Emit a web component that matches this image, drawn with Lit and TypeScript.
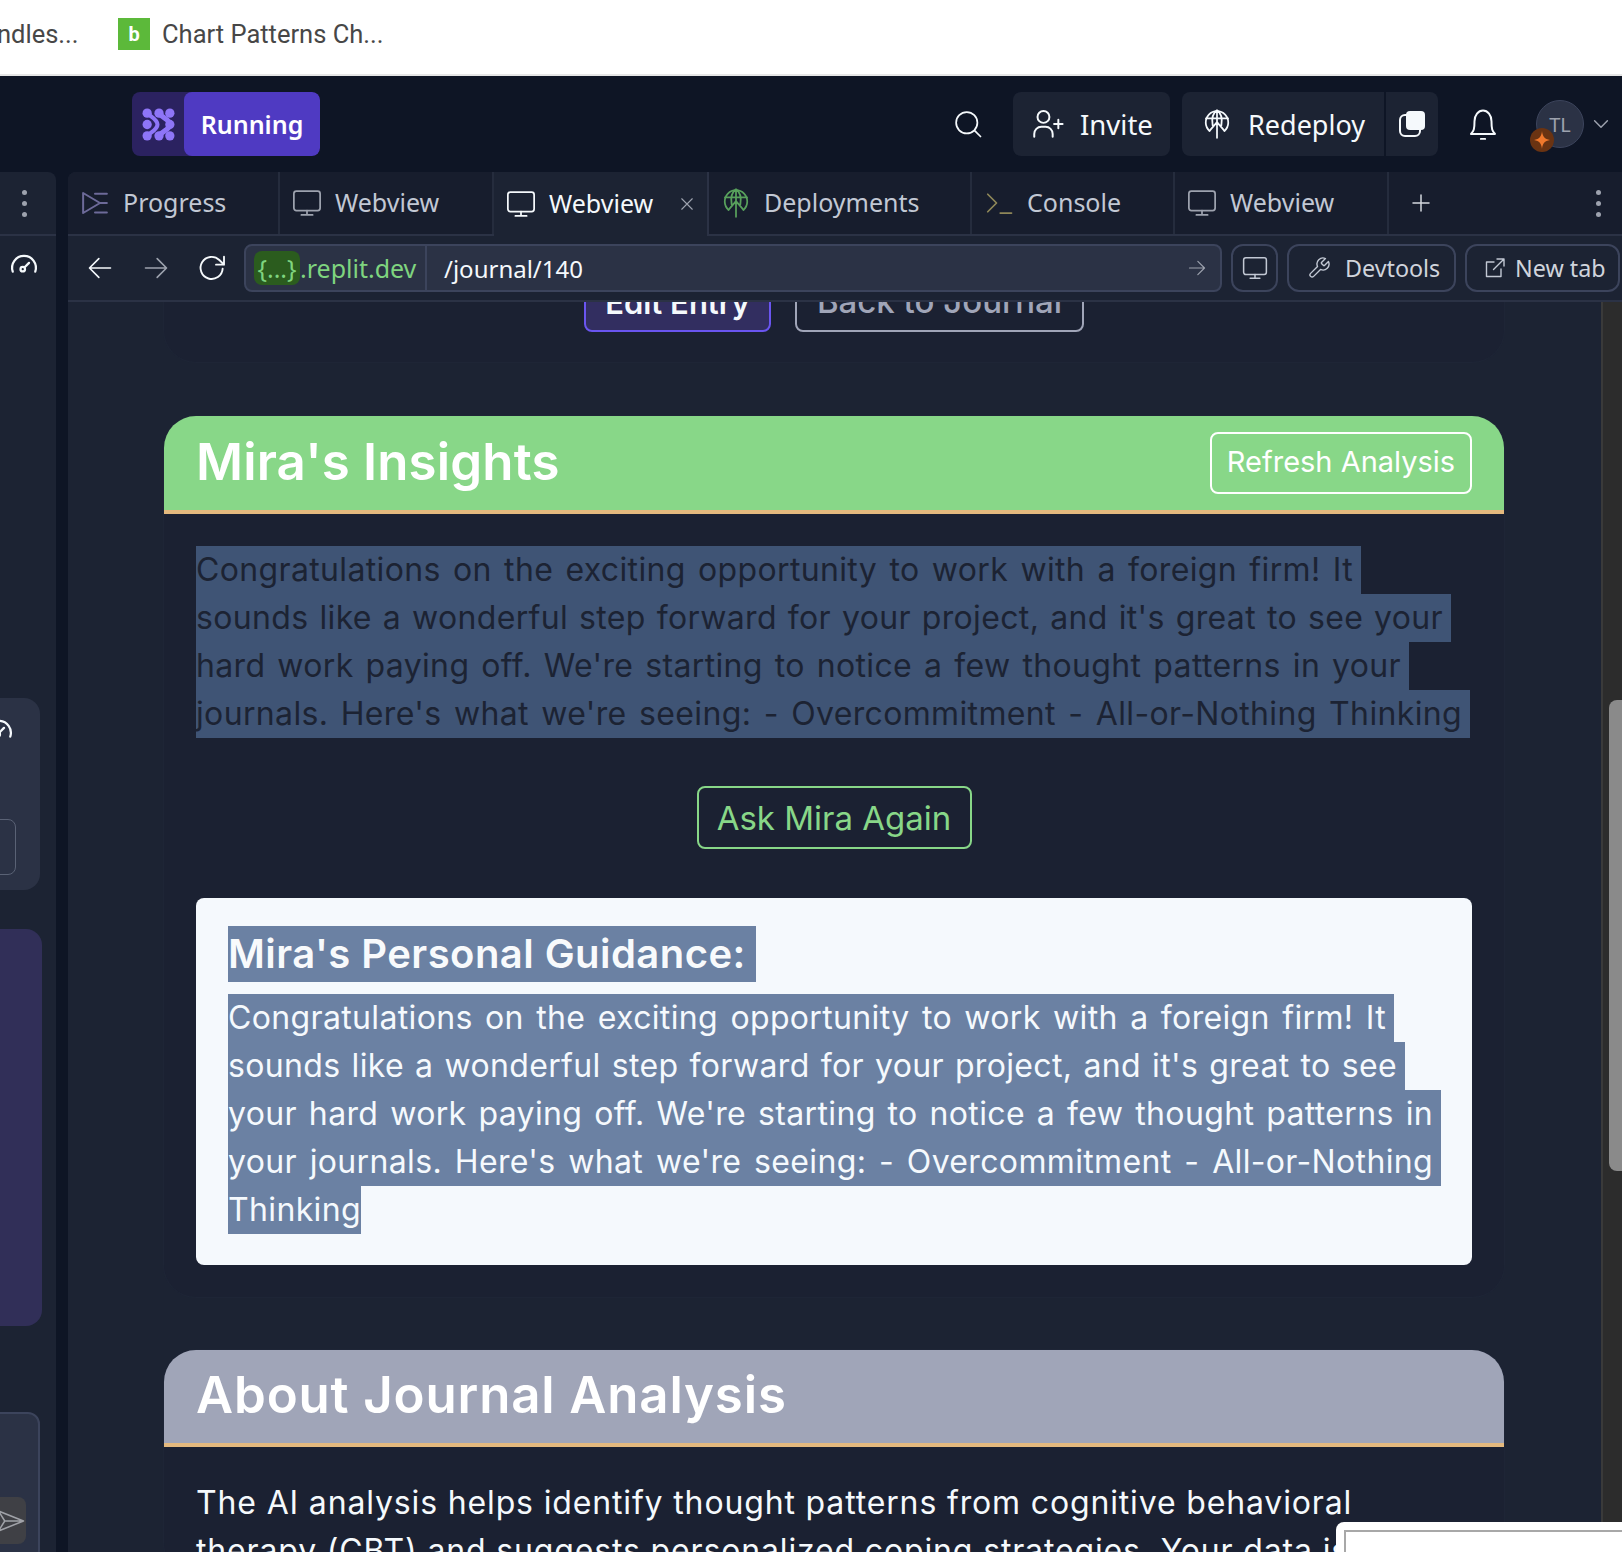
import { LitElement, html, css, svg } from 'lit';
import { customElement } from 'lit/decorators.js';

const icon = (body: unknown, size = 28, color = 'currentColor', sw = 1.4) => html`
    <svg width="${size}" height="${size}" viewBox="0 0 24 24" fill="none" stroke="${color}"
        stroke-width="${sw}" stroke-linecap="round" stroke-linejoin="round">${body}</svg>
`;

const monitor = svg`<rect x="1.500" y="2.500" width="21" height="15.500" rx="2"/><path d="M12 18v3.500M7.500 21.500h9"/>`;
const globeArrow = svg`<path d="M6 17.500A9 9 0 1 1 18 17.500"/><path d="M3.200 7.500h17.600M12 1v9.500M8.500 13C7.500 7 9 3 12 1c3 2 4.500 6 3.500 12M6 17.500l6-7 6 7M12 10.500V23"/>`;
const progress = svg`<path d="M2.500 4 16 12 2.500 20zM12 4.500h9.500M16.500 12h5M12 19.500h9.500"/>`;
const terminal = svg`<path d="M3 5l7 7-7 7M13 20h9"/>`;
const arrowLeft = svg`<path d="M21 12H3.500M11 4l-8 8 8 8"/>`;
const arrowRight = svg`<path d="M3 12h17.500M13 4l8 8-8 8"/>`;
const refresh = svg`<path d="M20 12.500A8.300 8.300 0 1 1 17.500 6L21 9.500M21 3.500v6h-6"/>`;
const search = svg`<circle cx="11" cy="11" r="8.500"/><path d="M17.500 17.500 22 22"/>`;
const personPlus = svg`<circle cx="9.500" cy="7" r="4.200"/><path d="M3 21v-2a5 5 0 0 1 5-5h3a5 5 0 0 1 5 5v2M20 9v6M17 12h6"/>`;
const bell = svg`<path d="M3.500 19c2-2 2.500-3.500 2.500-9a6 7.500 0 0 1 12 0c0 5.500.5 7 2.500 9zM10.500 22.500h3"/>`;
const wrench = svg`<path d="M14.700 6.300a1 1 0 0 0 0 1.400l1.600 1.600a1 1 0 0 0 1.400 0l3.770-3.770a6 6 0 0 1-7.940 7.940l-6.910 6.910a2.120 2.120 0 0 1-3-3l6.910-6.910a6 6 0 0 1 7.940-7.940l-3.760 3.760z"/>`;
const external = svg`<path d="M18 13v7.500H3.500V6H11M14 3h7v7M21 3 10.500 13.500"/>`;
const gauge = svg`<path d="M3 16.500a9.500 9.500 0 1 1 18 0"/><circle cx="11" cy="14.500" r="1.800"/><path d="M12.500 13l3.500-3.500"/>`;
const close = svg`<path d="M5 5l14 14M19 5 5 19"/>`;
const plus = svg`<path d="M12 4v16M4 12h16"/>`;
const chevron = svg`<path d="M5 8.500l7 7 7-7"/>`;
const plane = svg`<path d="M2 4l20 8-20 8 5-8zM7 12h15"/>`;

const kebab = html`<span class="kebab"><i></i><i></i><i></i></span>`;

const tabs = [
    { w: 212, label: 'Progress', ic: progress, color: '#6d6a99', sw: 1.6 },
    { w: 214, label: 'Webview', ic: monitor, color: '#9da2ae', sw: 1.4 },
    { w: 215, label: 'Webview', ic: monitor, color: '#f5f9fc', sw: 1.4, active: true },
    { w: 263, label: 'Deployments', ic: globeArrow, color: '#58a05c', sw: 1.4 },
    { w: 203, label: 'Console', ic: terminal, color: '#8f8758', sw: 1.4 },
    { w: 214, label: 'Webview', ic: monitor, color: '#9da2ae', sw: 1.4 },
];

const summary = [
    { w: 1157, t: 'Congratulations on the exciting opportunity to work with a foreign firm! It' },
    { w: 1247, t: "sounds like a wonderful step forward for your project, and it's great to see your" },
    { w: 1205, t: "hard work paying off. We're starting to notice a few thought patterns in your" },
    { w: 1266, t: "journals. Here's what we're seeing: - Overcommitment - All-or-Nothing Thinking" },
];

const guidance = [
    { w: 1158, t: 'Congratulations on the exciting opportunity to work with a foreign firm! It' },
    { w: 1169, t: "sounds like a wonderful step forward for your project, and it's great to see" },
    { w: 1205, t: "your hard work paying off. We're starting to notice a few thought patterns in" },
    { w: 1205, t: "your journals. Here's what we're seeing: - Overcommitment - All-or-Nothing" },
    { w: 133, t: 'Thinking' },
];

const selLines = (lines: { w: number; t: string }[]) => lines.map(l => html`
    <div class="sel-line" style="width:${l.w}px"><span>${l.t}</span></div>
`);

@customElement('app-root')
export default class AppRoot extends LitElement {
    render() {
        return html`
            <div class="bookmarks">
                <span class="bm-cut">ndles...</span>
                <span class="favicon">b</span>
                <span class="bm-text">Chart Patterns Ch...</span>
            </div>

            <header class="topbar">
                <div class="running">
                    <span class="agent">
                        <svg width="33" height="33" viewBox="0 0 32 32" fill="#8e75f7">
                            <circle cx="5" cy="5" r="4.500"/><circle cx="16.500" cy="5" r="4.500"/><circle cx="27" cy="5" r="4.500"/>
                            <circle cx="5" cy="16" r="4.500"/><circle cx="27" cy="16" r="4.500"/>
                            <circle cx="5" cy="27" r="4.500"/><circle cx="16.500" cy="27" r="4.500"/><circle cx="27" cy="27" r="4.500"/>
                            <g fill="none" stroke="#8e75f7" stroke-linecap="round">
                                <path stroke-width="5" d="M16.500 5C20 10 27 11 27 16s-7 6-10.500 11"/>
                                <path stroke-width="4" d="M5 5c4 4 10 6 10 11S9 23 5 27"/>
                            </g>
                        </svg>
                    </span>
                    <span class="running-label">Running</span>
                </div>
                <div class="top-actions">
                    <span class="plain-icon search">${icon(search, 30)}</span>
                    <button class="top-btn invite">${icon(personPlus, 34)}<span>Invite</span></button>
                    <div class="deploy-group">
                        <button class="top-btn redeploy">${icon(globeArrow, 30)}<span>Redeploy</span></button>
                        <button class="top-btn copy">
                            <svg width="28" height="28" viewBox="0 0 28 28" fill="none">
                                <rect x="2" y="5" width="20" height="21" rx="5" stroke="#f5f9fc" stroke-width="2"/>
                                <rect x="8" y="1" width="19" height="19" rx="4" fill="#f5f9fc"/>
                            </svg>
                        </button>
                    </div>
                    <span class="plain-icon bell">${icon(bell, 34)}</span>
                    <div class="avatar">
                        <span class="circle">TL</span>
                        <span class="spark">
                            <svg width="18" height="18" viewBox="0 0 18 18" fill="#f0782c"><path d="M9 0c.6 5.500 2.500 8 8 9-5.500 1-7.400 3.500-8 9-.6-5.500-2.500-8-8-9 5.500-1 7.400-3.500 8-9z"/></svg>
                        </span>
                    </div>
                    <span class="chev">${icon(chevron, 22, '#9da2ae', 1.6)}</span>
                </div>
            </header>

            <div class="workspace">
                <aside class="side">
                    <div class="side-tabs">${kebab}</div>
                    <div class="side-tool">${icon(gauge, 30, '#f5f9fc', 1.8)}</div>
                    <div class="side-stack">
                        <div class="side-card">
                            <span class="side-gauge">${icon(gauge, 30, '#f5f9fc', 1.8)}</span>
                            <span class="side-box"></span>
                        </div>
                        <div class="side-purple"></div>
                        <div class="side-input">
                            <span class="send">${icon(plane, 30, '#a0a2a8', 1.2)}</span>
                        </div>
                    </div>
                </aside>

                <main class="panel">
                    <nav class="tabs">
                        ${tabs.map(t => html`
                            <div class="tab ${t.active ? 'active' : ''}" style="width:${t.w}px">
                                <span class="tab-ic" style="color:${t.color}">${icon(t.ic, 30, 'currentColor', t.sw)}</span>
                                <span class="tab-label">${t.label}</span>
                                ${t.active ? html`<span class="tab-x">${icon(close, 18, '#9da2ae', 1.5)}</span>` : ''}
                            </div>
                        `)}
                        <div class="tab-rest">
                            <span class="add">${icon(plus, 24, '#d5d8de', 1.5)}</span>
                            ${kebab}
                        </div>
                    </nav>

                    <div class="toolbar">
                        <span class="nav-ic">${icon(arrowLeft, 28, '#f5f9fc')}</span>
                        <span class="nav-ic dim">${icon(arrowRight, 28, '#9da2ae')}</span>
                        <span class="nav-ic">${icon(refresh, 32, '#f5f9fc')}</span>
                        <div class="url">
                            <span class="host"><span class="chip">{...}</span>.replit.dev</span>
                            <span class="path">/journal/140</span>
                            <span class="go">${icon(arrowRight, 20, '#9da2ae')}</span>
                        </div>
                        <button class="tool-btn square">${icon(monitor, 26, '#c2c8d4')}</button>
                        <button class="tool-btn dev">${icon(wrench, 24, '#c2c8d4')}<span>Devtools</span></button>
                        <button class="tool-btn tab-new">${icon(external, 24, '#c2c8d4')}<span>New tab</span></button>
                    </div>

                    <div class="scroller">
                        <section class="card top-card">
                            <div class="entry-actions">
                                <button class="edit">Edit Entry</button>
                                <button class="back">Back to Journal</button>
                            </div>
                        </section>

                        <section class="card insights">
                            <div class="card-head green">
                                <h2>Mira's Insights</h2>
                                <button class="refresh">Refresh Analysis</button>
                            </div>
                            <div class="card-body">
                                <div class="summary">${selLines(summary)}</div>
                                <div class="ask-row"><button class="ask">Ask Mira Again</button></div>
                                <div class="guidance">
                                    <h3><span>Mira's Personal Guidance:</span></h3>
                                    <div class="guidance-text">${selLines(guidance)}</div>
                                </div>
                            </div>
                        </section>

                        <section class="card about">
                            <div class="card-head slate"><h2>About Journal Analysis</h2></div>
                            <div class="card-body">
                                <p>The AI analysis helps identify thought patterns from cognitive behavioral</p>
                                <p>therapy (CBT) and suggests personalized coping strategies. Your data is</p>
                            </div>
                        </section>

                        <div class="scrollbar"><span class="thumb"></span></div>
                    </div>
                </main>
            </div>

            <div class="popup"><div class="popup-field"></div></div>
        `;
    };

    static styles = css`
        :host {
            display: flex;
            flex-direction: column;
            position: relative;
            width: 1622px;
            height: 1552px;
            overflow: hidden;
            background: #0e1525;
            font-family: "Noto Sans", sans-serif;
        }

        button {
            font-family: inherit;
            cursor: pointer;
        }

        .bookmarks {
            flex: none;
            height: 74px;
            box-sizing: content-box;
            background: #fff;
            border-bottom: 2px solid #e6e6e6;
            display: flex;
            align-items: flex-start;
            font-family: Roboto, sans-serif;
            font-size: 25.5px;
            line-height: 32px;
            color: #474747;
        }

        .bookmarks > span {
            margin-top: 18px;
        }

        .bm-cut {
            width: 118px;
            margin-left: -3px;
            flex: none;
        }

        .favicon {
            width: 32px;
            height: 32px;
            background: #5cb93a;
            color: #fff;
            font-size: 20px;
            font-weight: 700;
            display: flex;
            align-items: center;
            justify-content: center;
            margin-left: 3px;
        }

        .bm-text {
            margin-left: 12px;
        }

        .topbar {
            flex: none;
            height: 96px;
            display: flex;
            align-items: center;
            justify-content: space-between;
            padding: 0 0 0 132px;
            color: #f5f9fc;
        }

        .running {
            display: flex;
            height: 64px;
            width: 188px;
            border-radius: 8px;
            background: #2b2260;
            overflow: hidden;
        }

        .agent {
            width: 52px;
            flex: none;
            display: flex;
            align-items: center;
            justify-content: center;
        }

        .running-label {
            flex: 1;
            background: #4f3ac2;
            border-radius: 8px;
            font-size: 25px;
            font-weight: 600;
            display: flex;
            align-items: center;
            justify-content: center;
            color: #fff;
        }

        .top-actions {
            display: flex;
            align-items: center;
            height: 64px;
        }

        .plain-icon {
            display: flex;
        }

        .search {
            margin-right: 30px;
        }

        .top-btn {
            height: 64px;
            background: #1c2333;
            border: none;
            color: #f5f9fc;
            font-size: 27.500px;
            display: flex;
            align-items: center;
            padding: 0;
        }

        .invite {
            width: 157px;
            border-radius: 8px;
            gap: 16px;
            padding-left: 17px;
            margin-right: 12px;
        }

        .deploy-group {
            display: flex;
            gap: 2px;
            margin-right: 28px;
        }

        .redeploy {
            width: 202px;
            border-radius: 8px 0 0 8px;
            gap: 16px;
            padding-left: 20px;
            font-size: 27px;
        }

        .copy {
            width: 52px;
            border-radius: 0 8px 8px 0;
            justify-content: center;
        }

        .bell {
            margin-right: 36px;
        }

        .avatar {
            position: relative;
            width: 48px;
            height: 48px;
        }

        .circle {
            display: flex;
            align-items: center;
            justify-content: center;
            width: 48px;
            height: 48px;
            border-radius: 50%;
            background: #2b3245;
            border: 1px solid #3c445c;
            box-sizing: border-box;
            color: #9da2ae;
            font-size: 20px;
        }

        .spark {
            position: absolute;
            left: -6px;
            top: 28px;
            width: 24px;
            height: 24px;
            border-radius: 50%;
            background: #6a3312;
            display: flex;
            align-items: center;
            justify-content: center;
        }

        .chev {
            display: flex;
            margin: 0 10px 0 6px;
        }

        .workspace {
            flex: 1;
            min-height: 0;
            display: flex;
            gap: 12px;
        }

        .side {
            flex: none;
            width: 56px;
            background: #1c2333;
            border-radius: 0 8px 0 0;
            display: flex;
            flex-direction: column;
            overflow: hidden;
        }

        .side-tabs {
            height: 62px;
            border-bottom: 2px solid #2b3245;
            display: flex;
            align-items: center;
            justify-content: center;
            flex: none;
            padding-right: 8px;
        }

        .kebab {
            display: inline-flex;
            flex-direction: column;
            gap: 6px;
        }

        .kebab i {
            width: 5px;
            height: 5px;
            border-radius: 50%;
            background: #9da2ae;
            display: block;
        }

        .side-tool {
            height: 60px;
            display: flex;
            align-items: center;
            justify-content: center;
            flex: none;
            padding-right: 8px;
        }

        .side-stack {
            margin-top: 402px;
            display: flex;
            flex-direction: column;
            margin-left: -60px;
        }

        .side-card {
            width: 100px;
            height: 192px;
            background: #2b3245;
            border-radius: 16px;
            position: relative;
            overflow: hidden;
        }

        .side-gauge {
            position: absolute;
            left: 44px;
            top: 18px;
        }

        .side-box {
            position: absolute;
            right: 24px;
            top: 121px;
            width: 60px;
            height: 56px;
            border: 1.5px solid #5a6275;
            border-radius: 8px;
            box-sizing: border-box;
        }

        .side-purple {
            width: 102px;
            height: 397px;
            margin-top: 39px;
            background: #312f58;
            border-radius: 16px;
        }

        .side-input {
            width: 100px;
            height: 150px;
            margin-top: 86px;
            background: #2b3245;
            border: 2px solid #3c445c;
            border-radius: 12px;
            box-sizing: border-box;
            position: relative;
        }

        .send {
            position: absolute;
            right: 12px;
            top: 83px;
            width: 60px;
            height: 47px;
            background: #3f4045;
            border-radius: 8px;
            display: flex;
            align-items: center;
            justify-content: flex-end;
        }

        .panel {
            flex: 1;
            min-width: 0;
            background: #1c2333;
            display: flex;
            flex-direction: column;
            border-radius: 8px 0 0 0;
            overflow: hidden;
        }

        .tabs {
            flex: none;
            height: 62px;
            display: flex;
            background: #171d2d;
            border-bottom: 2px solid #2b3245;
        }

        .tab {
            display: flex;
            align-items: center;
            flex: none;
            gap: 13px;
            padding-left: 12px;
            box-sizing: border-box;
            border-right: 2px solid #252c3d;
            color: #c2c8d4;
            font-size: 25px;
        }

        .tab-label {
            padding-bottom: 2px;
        }

        .tab.active {
            background: #1c2333;
            color: #f5f9fc;
            height: 64px;
            border-right-color: #2b3245;
        }

        .tab-ic {
            display: flex;
        }

        .tab-x {
            display: flex;
            margin-left: 12px;
        }

        .tab-rest {
            flex: 1;
            display: flex;
            align-items: center;
            justify-content: space-between;
            padding: 0 21px 0 20px;
        }

        .add {
            display: flex;
        }

        .toolbar {
            flex: none;
            height: 64px;
            border-bottom: 2px solid #2b3245;
            display: flex;
            align-items: center;
            padding: 0 2px 0 0;
            background: #1c2333;
        }

        .nav-ic {
            display: flex;
            width: 56px;
            justify-content: center;
            flex: none;
        }

        .nav-ic:first-child {
            margin-left: 4px;
        }

        .url {
            margin-left: 4px;
            width: 978px;
            height: 48px;
            background: #2b3245;
            border: 2px solid #3c445c;
            border-radius: 8px;
            box-sizing: border-box;
            display: flex;
            align-items: center;
            font-size: 25px;
            color: #f5f9fc;
            flex: none;
        }

        .host {
            color: #7fd47f;
            width: 181px;
            height: 44px;
            border-right: 2px solid #3c445c;
            display: flex;
            align-items: center;
            padding-left: 8px;
            box-sizing: border-box;
            flex: none;
        }

        .chip {
            background: #2b5c1e;
            height: 34px;
            width: 46px;
            border-radius: 8px;
            display: flex;
            align-items: center;
            justify-content: center;
            flex: none;
        }

        .path {
            margin-left: 17px;
            flex: 1;
            font-size: 24px;
        }

        .go {
            display: flex;
            margin-right: 13px;
        }

        .tool-btn {
            height: 48px;
            background: transparent;
            border: 2px solid #3c445c;
            border-radius: 12px;
            color: #d0d4dc;
            font-size: 23.300px;
            display: flex;
            align-items: center;
            padding: 0;
            box-sizing: border-box;
            flex: none;
            margin-left: 9px;
        }

        .square {
            width: 47px;
            justify-content: center;
        }

        .dev {
            width: 169px;
            gap: 14px;
            padding-left: 18px;
        }

        .tab-new {
            width: 155px;
            gap: 8px;
            padding-left: 16px;
        }

        .scroller {
            flex: 1;
            min-height: 0;
            overflow: hidden;
            position: relative;
            padding: 0 0 0 96px;
            color: #f5f9fc;
            font-size: 32px;
            line-height: 48px;
            font-family: Inter, sans-serif;
        }

        .card {
            width: 1340px;
            border-radius: 32px;
            box-shadow: 0 0 0 1px #1e2536;
            background: #1b2132;
        }

        .top-card {
            height: 60px;
            border-radius: 0 0 32px 32px;
        }

        .entry-actions {
            display: flex;
            gap: 24px;
            margin-left: 420px;
            position: relative;
            top: -32px;
            height: 62px;
        }

        .entry-actions button {
            height: 62px;
            border-radius: 8px;
            font-family: Inter, sans-serif;
            font-weight: 500;
            font-size: 33px;
            background: transparent;
            padding: 0;
        }

        .entry-actions .edit {
            width: 187px;
            background: #322e60;
            border: 2px solid #6a55f0;
            color: #f5f9fc;
            font-size: 31px;
            font-weight: 600;
            padding-top: 3px;
        }

        .back {
            width: 289px;
            border: 2px solid #a0a5b8;
            color: #a0a5b8;
        }

        .insights {
            margin-top: 54px;
            padding-bottom: 32px;
        }

        .about {
            margin-top: 53px;
        }

        .card-head {
            height: 94px;
            border-bottom: 4px solid #e4b97e;
            border-radius: 32px 32px 0 0;
            display: flex;
            align-items: center;
            justify-content: space-between;
            padding: 0 32px;
        }

        .green {
            background: #88d788;
        }

        .slate {
            background: #a0a5b8;
            height: 93px;
        }

        .card-head h2 {
            margin: 0 0 4px;
            font-size: 51px;
            font-weight: 600;
            line-height: 1;
            color: #fff;
        }

        .green h2 {
            letter-spacing: 0.15px;
        }

        .slate h2 {
            letter-spacing: 0.85px;
        }

        .refresh {
            width: 262px;
            height: 62px;
            padding: 0 0 3px;
            border: 2px solid #fff;
            border-radius: 8px;
            background: transparent;
            color: #fff;
            font-size: 29px;
            font-family: Inter, sans-serif;
        }

        .card-body {
            padding: 32px 32px 0;
        }

        .card-body p {
            margin: 0;
            white-space: nowrap;
            letter-spacing: 0.85px;
        }

        .sel-line {
            height: 48px;
            letter-spacing: 0.35px;
            text-align: justify;
            text-align-last: justify;
        }

        .sel-line span {
            display: block;
        }

        .summary .sel-line {
            color: #1c2333;
            background: #3f5475;
            padding-right: 8px;
        }

        .ask-row {
            display: flex;
            justify-content: center;
            margin-top: 48px;
        }

        .ask {
            width: 275px;
            height: 63px;
            padding: 0;
            border: 2px solid #88d788;
            border-radius: 8px;
            background: transparent;
            color: #88d788;
            font-size: 33px;
            font-family: Inter, sans-serif;
            font-weight: 400;
        }

        .guidance {
            margin-top: 49px;
            height: 367px;
            box-sizing: border-box;
            padding: 28px 32px 0;
            background: #f5f9fd;
            border-radius: 8px;
        }

        .guidance h3 {
            margin: 0 0 12px;
            height: 56px;
            width: 528px;
            background: #6b81a3;
            color: #f8fafc;
            font-size: 40px;
            font-weight: 600;
            line-height: 56px;
            letter-spacing: 0.45px;
            white-space: nowrap;
        }

        .guidance-text .sel-line {
            color: #f5f9fd;
            background: #6b81a3;
            padding-right: 8px;
        }

        .guidance-text .sel-line:last-child {
            padding-right: 0;
        }

        .scrollbar {
            position: absolute;
            top: 0;
            right: 0;
            bottom: 0;
            width: 19px;
            background: #2c2c2c;
            border-left: 2px solid #3a3a3a;
        }

        .thumb {
            position: absolute;
            left: 6px;
            right: 0;
            top: 398px;
            height: 471px;
            border-radius: 8px 0 0 8px;
            background: #8a8a8a;
        }

        .popup {
            position: absolute;
            right: 0;
            bottom: 0;
            width: 286px;
            height: 30px;
            background: #fff;
            border-radius: 8px 0 0 0;
            padding: 8px 0 0 8px;
            box-sizing: border-box;
        }

        .popup-field {
            height: 100%;
            border-top: 2px solid #a8a8a8;
            border-left: 2px solid #a8a8a8;
            box-sizing: border-box;
        }
    `;
};
